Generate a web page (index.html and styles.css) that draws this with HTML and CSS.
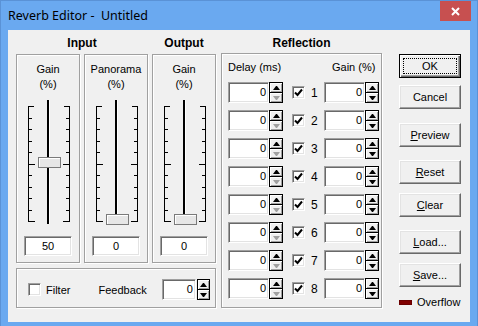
FILE: index.html
```html
<!DOCTYPE html>
<html lang="en">
<head>
    <meta charset="UTF-8">
    <title>Reverb Editor</title>
    <link rel="stylesheet" href="styles.css">
</head>
<body>
<div class="window">
    <!-- title bar -->
    <div class="title_bar">
        <span class="title">Reverb Editor -  Untitled</span>
        <div class="close">
            <svg width="9" height="9" viewBox="0 0 9 9"><path d="M1 1L8 8M8 1L1 8" stroke="#fff" stroke-width="2"/></svg>
        </div>
    </div>
    <div class="client">
        <!-- input / output faders -->
        <div class="left_col">
            <div class="heads">
                <p class="head in_head">Input</p>
                <p class="head out_head">Output</p>
            </div>
            <div class="faders">
                <div class="group fader">
                    <p class="label">Gain<br>(%)</p>
                    <div class="slider">
                        <div class="scale scale_l"><i></i><i></i><i></i><i></i><i></i><i></i><i></i><i></i><i></i><i></i><i></i></div>
                        <div class="track"></div>
                        <div class="scale scale_r"><i></i><i></i><i></i><i></i><i></i><i></i><i></i><i></i><i></i><i></i><i></i></div>
                        <div class="thumb thumb_mid"></div>
                    </div>
                    <div class="edit value">50</div>
                </div>
                <div class="group fader">
                    <p class="label">Panorama<br>(%)</p>
                    <div class="slider">
                        <div class="scale scale_l"><i></i><i></i><i></i><i></i><i></i><i></i><i></i><i></i><i></i><i></i><i></i></div>
                        <div class="track"></div>
                        <div class="scale scale_r"><i></i><i></i><i></i><i></i><i></i><i></i><i></i><i></i><i></i><i></i><i></i></div>
                        <div class="thumb thumb_low"></div>
                    </div>
                    <div class="edit value">0</div>
                </div>
                <div class="group fader">
                    <p class="label">Gain<br>(%)</p>
                    <div class="slider">
                        <div class="scale scale_l"><i></i><i></i><i></i><i></i><i></i><i></i><i></i><i></i><i></i><i></i><i></i></div>
                        <div class="track"></div>
                        <div class="scale scale_r"><i></i><i></i><i></i><i></i><i></i><i></i><i></i><i></i><i></i><i></i><i></i></div>
                        <div class="thumb thumb_low"></div>
                    </div>
                    <div class="edit value">0</div>
                </div>
            </div>
            <div class="group options">
                <div class="check"></div>
                <span class="filter_txt">Filter</span>
                <span class="feedback_txt">Feedback</span>
                <div class="edit feedback">0</div>
                <div class="spin spin_fb"><span class="up"></span><span class="down"></span></div>
            </div>
        </div>

        <!-- reflections -->
        <div class="refl_col">
            <p class="head">Reflection</p>
            <div class="group reflection">
                <div class="refl_labels"><span>Delay (ms)</span><span>Gain (%)</span></div>
                <div class="row">
                    <div class="edit">0</div>
                    <div class="spin"><span class="up"></span><span class="down off"></span></div>
                    <div class="check on"><svg width="9" height="9" viewBox="0 0 9 9"><path d="M1 4.5L3.5 7L8 1.5" fill="none" stroke="#000" stroke-width="2"/></svg></div>
                    <span class="num">1</span>
                    <div class="edit">0</div>
                    <div class="spin"><span class="up"></span><span class="down"></span></div>
                </div>
                <div class="row">
                    <div class="edit">0</div>
                    <div class="spin"><span class="up"></span><span class="down off"></span></div>
                    <div class="check on"><svg width="9" height="9" viewBox="0 0 9 9"><path d="M1 4.5L3.5 7L8 1.5" fill="none" stroke="#000" stroke-width="2"/></svg></div>
                    <span class="num">2</span>
                    <div class="edit">0</div>
                    <div class="spin"><span class="up"></span><span class="down"></span></div>
                </div>
                <div class="row">
                    <div class="edit">0</div>
                    <div class="spin"><span class="up"></span><span class="down off"></span></div>
                    <div class="check on"><svg width="9" height="9" viewBox="0 0 9 9"><path d="M1 4.5L3.5 7L8 1.5" fill="none" stroke="#000" stroke-width="2"/></svg></div>
                    <span class="num">3</span>
                    <div class="edit">0</div>
                    <div class="spin"><span class="up"></span><span class="down"></span></div>
                </div>
                <div class="row">
                    <div class="edit">0</div>
                    <div class="spin"><span class="up"></span><span class="down off"></span></div>
                    <div class="check on"><svg width="9" height="9" viewBox="0 0 9 9"><path d="M1 4.5L3.5 7L8 1.5" fill="none" stroke="#000" stroke-width="2"/></svg></div>
                    <span class="num">4</span>
                    <div class="edit">0</div>
                    <div class="spin"><span class="up"></span><span class="down"></span></div>
                </div>
                <div class="row">
                    <div class="edit">0</div>
                    <div class="spin"><span class="up"></span><span class="down off"></span></div>
                    <div class="check on"><svg width="9" height="9" viewBox="0 0 9 9"><path d="M1 4.5L3.5 7L8 1.5" fill="none" stroke="#000" stroke-width="2"/></svg></div>
                    <span class="num">5</span>
                    <div class="edit">0</div>
                    <div class="spin"><span class="up"></span><span class="down"></span></div>
                </div>
                <div class="row">
                    <div class="edit">0</div>
                    <div class="spin"><span class="up"></span><span class="down off"></span></div>
                    <div class="check on"><svg width="9" height="9" viewBox="0 0 9 9"><path d="M1 4.5L3.5 7L8 1.5" fill="none" stroke="#000" stroke-width="2"/></svg></div>
                    <span class="num">6</span>
                    <div class="edit">0</div>
                    <div class="spin"><span class="up"></span><span class="down"></span></div>
                </div>
                <div class="row">
                    <div class="edit">0</div>
                    <div class="spin"><span class="up"></span><span class="down off"></span></div>
                    <div class="check on"><svg width="9" height="9" viewBox="0 0 9 9"><path d="M1 4.5L3.5 7L8 1.5" fill="none" stroke="#000" stroke-width="2"/></svg></div>
                    <span class="num">7</span>
                    <div class="edit">0</div>
                    <div class="spin"><span class="up"></span><span class="down"></span></div>
                </div>
                <div class="row">
                    <div class="edit">0</div>
                    <div class="spin"><span class="up"></span><span class="down off"></span></div>
                    <div class="check on"><svg width="9" height="9" viewBox="0 0 9 9"><path d="M1 4.5L3.5 7L8 1.5" fill="none" stroke="#000" stroke-width="2"/></svg></div>
                    <span class="num">8</span>
                    <div class="edit">0</div>
                    <div class="spin"><span class="up"></span><span class="down"></span></div>
                </div>
            </div>
        </div>

        <!-- dialog buttons -->
        <div class="buttons">
            <div class="btn btn_default">OK</div>
            <div class="btn gap_7">Cancel</div>
            <div class="btn gap_14"><u>P</u>review</div>
            <div class="btn gap_13"><u>R</u>eset</div>
            <div class="btn gap_9"><u>C</u>lear</div>
            <div class="btn gap_13"><u>L</u>oad...</div>
            <div class="btn gap_9"><u>S</u>ave...</div>
            <div class="overflow">
                <div class="led"></div>
                <span>Overflow</span>
            </div>
        </div>
    </div>
</div>
</body>
</html>
```

FILE: styles.css
```css
*{
    margin: 0;
    padding: 0;
    box-sizing: border-box;
}
body{
    width: 478px;
    height: 326px;
    overflow: hidden;
    font-family: "Liberation Sans", Arial, sans-serif;
    font-size: 11px;
    color: #000;
}
.window{
    height: 326px;
    background-color: #6aa9f0;
    border: 1px solid #5a92d6;
    border-bottom: none;
}
.title_bar{
    height: 29px;
    display: flex;
    justify-content: space-between;
}
.title{
    font-family: "Noto Sans", "Open Sans", sans-serif;
    font-size: 12.5px;
    line-height: 17px;
    padding: 6px 0 0 7px;
    white-space: pre;
}
.close{
    width: 31px;
    height: 20px;
    margin-right: 6px;
    background-color: #c75050;
    display: flex;
    justify-content: center;
    align-items: center;
}
.client{
    height: 292px;
    margin: 0 7px;
    background-color: #f0f0f0;
    display: flex;
}

/* group boxes */
.group{
    border: 1px solid #a0a0a0;
    box-shadow: inset 1px 1px 0 #fff, 1px 1px 0 #fff;
}
.head{
    height: 24px;
    padding-top: 2px;
    line-height: 22px;
    font-size: 12px;
    font-weight: bold;
    text-align: center;
}

/* left column */
.left_col{
    width: 200px;
    margin-left: 8px;
}
.heads{
    display: flex;
    gap: 4px;
}
.in_head{
    width: 132px;
}
.out_head{
    width: 64px;
}
.faders{
    display: flex;
    gap: 4px;
}
.fader{
    width: 64px;
    height: 209px;
    padding-top: 7px;
}
.label{
    line-height: 15px;
    text-align: center;
}
.slider{
    position: relative;
    width: 42px;
    height: 124px;
    margin: 8px 0 0 11px;
}
.scale{
    position: absolute;
    top: 6px;
    width: 7px;
    height: 116px;
    display: flex;
    flex-direction: column;
    justify-content: space-between;
}
.scale i{
    display: block;
    width: 3px;
    height: 1px;
    background-color: #000;
}
.scale i:first-child{
    width: 5px;
}
.scale i:nth-child(6),.scale i:last-child{
    width: 6px;
}
.scale_l{
    left: 0;
    border-left: 1px solid #000;
}
.scale_r{
    right: 0;
    border-right: 1px solid #000;
    align-items: flex-end;
}
.track{
    position: absolute;
    left: 19px;
    top: 0;
    width: 3px;
    height: 124px;
    background: linear-gradient(to right, #000 2px, #fff 2px);
}
.thumb{
    position: absolute;
    left: 10px;
    width: 23px;
    height: 11px;
    background-color: #e6e6e6;
    border: 1px solid #7a7a7a;
    box-shadow: inset 1px 1px 0 #fff;
}
.thumb_mid{
    top: 57px;
}
.thumb_low{
    top: 114px;
}

/* edit fields */
.edit{
    width: 41px;
    height: 21px;
    background-color: #fff;
    border: 1px solid;
    border-color: #a0a0a0 #fff #fff #a0a0a0;
    box-shadow: inset 1px 1px 0 #696969, inset -1px -1px 0 #e3e3e3;
    text-align: right;
    padding-right: 2px;
    line-height: 19px;
}
.value{
    width: 48px;
    height: 20px;
    margin: 12px auto 0;
    padding: 0;
    text-align: center;
    line-height: 18px;
}
.spin{
    width: 14px;
    height: 21px;
    border: 1px solid #000;
    display: flex;
    flex-direction: column;
    background-color: #f0f0f0;
}
.spin span{
    flex: 1;
    display: flex;
    justify-content: center;
    align-items: center;
    box-shadow: inset 1px 1px 0 #fff, inset -1px -1px 0 #a0a0a0;
}
.spin span+span{
    border-top: 1px solid #000;
}
.spin span::after{
    content: "";
    width: 1px;
    border-left: 3px solid transparent;
    border-right: 3px solid transparent;
}
.spin .up::after{
    border-bottom: 4px solid #000;
}
.spin .down::after{
    border-top: 4px solid #000;
}
.spin .off::after{
    border-top-color: #a0a0a0;
}
.check{
    width: 13px;
    height: 13px;
    background-color: #fff;
    border: 1px solid;
    border-color: #a0a0a0 #fff #fff #a0a0a0;
    box-shadow: inset 1px 1px 0 #696969, inset -1px -1px 0 #e3e3e3;
    display: flex;
    justify-content: center;
    align-items: center;
}

/* filter / feedback row */
.options{
    height: 40px;
    margin-top: 5px;
    padding: 3px 0 0 11px;
    display: flex;
    align-items: center;
}
.filter_txt{
    margin-left: 5px;
}
.feedback_txt{
    margin-left: 28px;
}
.feedback{
    width: 34px;
    margin-left: 15px;
}
.spin_fb{
    width: 13px;
    margin-left: 1px;
}

/* reflection column */
.refl_col{
    width: 161px;
    margin-left: 5px;
}
.refl_col .head{
    height: 23px;
}
.reflection{
    height: 255px;
    padding: 6px 0 0 6px;
}
.refl_labels{
    display: flex;
    line-height: 15px;
    margin-bottom: 2px;
}
.refl_labels span:first-child{
    width: 104px;
}
.row{
    display: flex;
    align-items: center;
    margin-top: 7px;
}
.row .check{
    margin-left: 9px;
}
.num{
    width: 19px;
    padding-left: 6px;
    font-size: 12px;
}

/* buttons */
.buttons{
    width: 62px;
    margin-left: 17px;
    padding-top: 24px;
    display: flex;
    flex-direction: column;
}
.btn{
    height: 24px;
    line-height: 22px;
    text-align: center;
    background-color: #f0f0f0;
    border: 1px solid;
    border-color: #fff #696969 #696969 #fff;
    box-shadow: inset -1px -1px 0 #a0a0a0, inset 1px 1px 0 #e3e3e3;
}
.btn_default{
    border-color: #000;
    box-shadow: inset 1px 1px 0 #fff, inset -1px -1px 0 #696969, inset -2px -2px 0 #a0a0a0;
    outline: 1px dotted #000;
    outline-offset: -5px;
}
.gap_7{
    margin-top: 7px;
}
.gap_9{
    margin-top: 9px;
}
.gap_13{
    margin-top: 13px;
}
.gap_14{
    margin-top: 14px;
}
.overflow{
    display: flex;
    align-items: center;
    margin-top: 9px;
    height: 12px;
}
.led{
    width: 13px;
    height: 5px;
    background-color: #800000;
    border: 1px solid #6a0000;
}
.overflow span{
    margin-left: 5px;
}
```
